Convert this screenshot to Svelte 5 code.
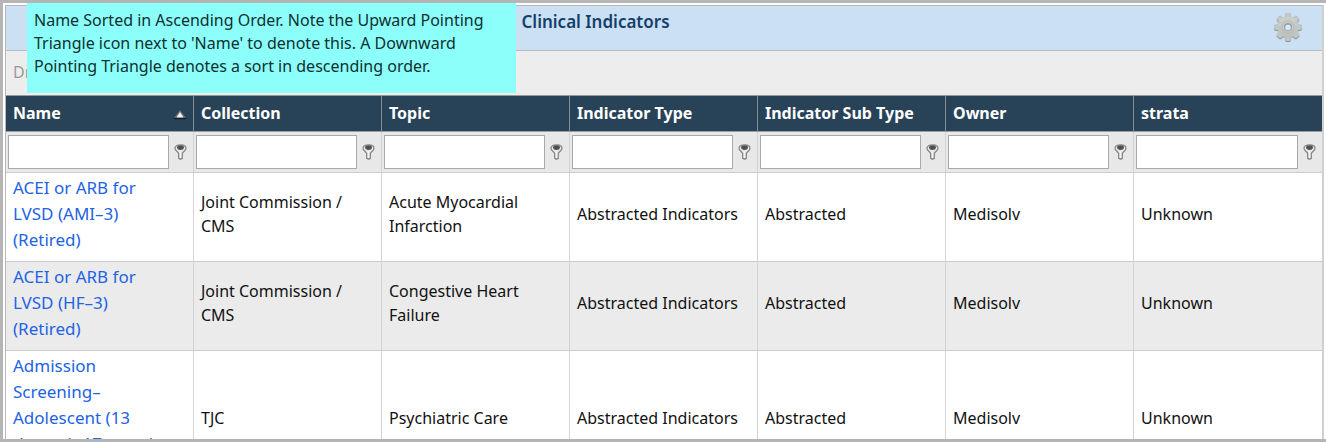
<script>
  const columns = [
    "Name",
    "Collection",
    "Topic",
    "Indicator Type",
    "Indicator Sub Type",
    "Owner",
    "strata",
  ];

  const rows = [
    [
      "ACEI or ARB for LVSD (AMI–3) (Retired)",
      "Joint Commission / CMS",
      "Acute Myocardial Infarction",
      "Abstracted Indicators",
      "Abstracted",
      "Medisolv",
      "Unknown",
    ],
    [
      "ACEI or ARB for LVSD (HF–3) (Retired)",
      "Joint Commission / CMS",
      "Congestive Heart Failure",
      "Abstracted Indicators",
      "Abstracted",
      "Medisolv",
      "Unknown",
    ],
    [
      "Admission Screening– Adolescent (13 through 17 years) (Retired)",
      "TJC",
      "Psychiatric Care",
      "Abstracted Indicators",
      "Abstracted",
      "Medisolv",
      "Unknown",
    ],
  ];

  const teeth = [0, 45, 90, 135, 180, 225, 270, 315];
  let filters = $state(columns.map(() => ""));
</script>

<div class="frame">
  <div class="grid">
    <div class="title">
      <h1>Clinical Indicators</h1>
      <button class="settings" aria-label="Settings">
        <svg width="30" height="32" viewBox="0 0 30 32">
          <defs>
            <linearGradient id="metal" x1="0" y1="0" x2="0" y2="1">
              <stop offset="0" stop-color="#cdd0cc" />
              <stop offset="1" stop-color="#bcc1be" />
            </linearGradient>
          </defs>
          <g fill="#8b9293" stroke="#8b9293" stroke-linejoin="round" transform="translate(0 1)">
            {#each teeth as angle}
              <path d="M12 6 13 1.5H17L18 6Z" transform="rotate({angle} 15 15)" />
            {/each}
            <circle cx="15" cy="15" r="9.5" />
          </g>
          <g fill="#c3c8c5" stroke="#bcc3c1" stroke-linejoin="round">
            {#each teeth as angle}
              <path d="M12 6 13 1.5H17L18 6Z" transform="rotate({angle} 15 15)" />
            {/each}
          </g>
          <circle cx="15" cy="15" r="10.5" fill="url(#metal)" />
          <circle cx="15" cy="15" r="6" fill="none" stroke="#b3bbba" />
          <circle cx="15" cy="15" r="4" fill="#98a3a7" />
          <circle cx="15" cy="15.5" r="2.8" fill="#d8e8f7" />
        </svg>
      </button>
    </div>

    <div class="group-bar">Dr</div>

    <table>
      <thead>
        <tr class="headings">
          {#each columns as column, i}
            <th scope="col" aria-sort={i === 0 ? "ascending" : undefined}>
              <div class="heading">
                {column}
                {#if i === 0}
                  <svg width="12" height="10" viewBox="0 0 12 10" aria-hidden="true">
                    <path d="M6 0 12 8H0Z" fill="#6d7375" />
                    <path d="M6 2 9.5 7.5H2.5Z" fill="#f4f4f4" />
                    <path d="M0 8.5H12" stroke="#15212a" stroke-width="1.4" />
                  </svg>
                {/if}
              </div>
            </th>
          {/each}
        </tr>
        <tr class="filters">
          {#each columns as column, i}
            <td>
              <div class="filter">
                <input type="text" aria-label="Filter {column}" bind:value={filters[i]} />
                <button aria-label="{column} filter options">
                  <svg width="13" height="16" viewBox="0 0 13 16">
                    <path
                      d="M1 4.2C1 2 3.2.9 6.5.9S12 2 12 4.2C12 6.8 8.9 7.6 8.3 9.5V14.3L6.5 15.2 4.7 14.3V9.5C4.1 7.6 1 6.8 1 4.2Z"
                      fill="#e8e8e8"
                      stroke="#858585"
                      stroke-width="1.3"
                    />
                    <ellipse cx="6.5" cy="3.6" rx="3.4" ry="2.3" fill="#505050" />
                    <path d="M6.5 7V14" stroke="#f4f4f4" stroke-width="1.4" />
                  </svg>
                </button>
              </div>
            </td>
          {/each}
        </tr>
      </thead>
      <tbody>
        {#each rows as row}
          <tr>
            {#each row as cell, i}
              <td>
                {#if i === 0}
                  <a href="#indicator">{cell}</a>
                {:else}
                  {cell}
                {/if}
              </td>
            {/each}
          </tr>
        {/each}
      </tbody>
    </table>
  </div>

  <div class="note">
    Name Sorted in Ascending Order. Note the Upward Pointing Triangle icon next to
    'Name' to denote this. A Downward Pointing Triangle denotes a sort in descending
    order.
  </div>
</div>

<style>
  .frame {
    position: relative;
    box-sizing: border-box;
    height: 100vh;
    padding: 2px 2px 0;
    overflow: hidden;
    border: solid #b5b5b5;
    border-width: 3px 0 3px 3px;
    background: #fff;
    font-family: "Noto Sans", sans-serif;
    font-size: 16px;
    line-height: 24px;
    color: #111;
  }

  .grid {
    height: 100%;
    box-sizing: border-box;
    overflow: hidden;
    border: solid #b8b8b8;
    border-width: 1px 0 0 1px;
    border-right: 2px solid #d0d0d0;
  }

  .title {
    display: grid;
    grid-template-columns: 1fr 136px;
    box-sizing: border-box;
    height: 45px;
    padding-right: 19px;
    border-bottom: 1px solid #b8bcc0;
    background: #cce0f4;
  }

  .title h1 {
    margin: 0;
    padding: 4px 0 0 18px;
    text-align: center;
    font-size: 17px;
    line-height: 24px;
    font-weight: 600;
    color: #143f6b;
  }

  button {
    padding: 0;
    border: 0;
    background: none;
    cursor: pointer;
  }

  svg {
    display: block;
  }

  .settings {
    justify-self: end;
    align-self: center;
  }

  .group-bar {
    box-sizing: border-box;
    height: 44px;
    padding: 9px 7px;
    background: #ededed;
    color: #999;
  }

  table {
    width: 100%;
    table-layout: fixed;
    border-collapse: separate;
    border-spacing: 0;
  }

  th,
  td {
    box-sizing: border-box;
    padding: 2px 7px 8px;
    border-right: 1px solid #d3d3d3;
    border-bottom: 1px solid #ccc;
    text-align: left;
    vertical-align: middle;
  }

  th:last-child,
  td:last-child {
    border-right: 0;
  }

  .headings th {
    height: 37px;
    padding: 4px 7px 6px;
    border-top: 1px solid #999;
    border-right-color: #858c91;
    border-bottom-color: #9c9fa1;
    background: #284257;
    color: #fff;
  }

  .heading {
    display: flex;
    align-items: center;
    justify-content: space-between;
  }

  .heading svg {
    margin-top: 4px;
  }

  .filters td {
    height: 41px;
    padding: 0 6px 0 2px;
    background: #e8e8e8;
  }

  .filter {
    display: flex;
    align-items: center;
    gap: 5px;
  }

  input {
    flex: 1;
    min-width: 0;
    height: 34px;
    box-sizing: border-box;
    padding: 0 6px;
    border: 1px solid #a9a9a9;
    background: #fff;
    font: inherit;
  }

  tbody tr:nth-child(even) {
    background: #ebebeb;
  }

  tbody td:first-child {
    padding-right: 24px;
  }

  a {
    display: block;
    color: #2263e5;
    font-size: 17px;
    line-height: 26px;
    text-decoration: none;
  }

  .note {
    position: absolute;
    top: 0;
    left: 24px;
    box-sizing: border-box;
    width: 489px;
    min-height: 90px;
    padding: 6px 7px;
    background: #8cfffb;
    line-height: 23px;
    color: #102f30;
  }
</style>
